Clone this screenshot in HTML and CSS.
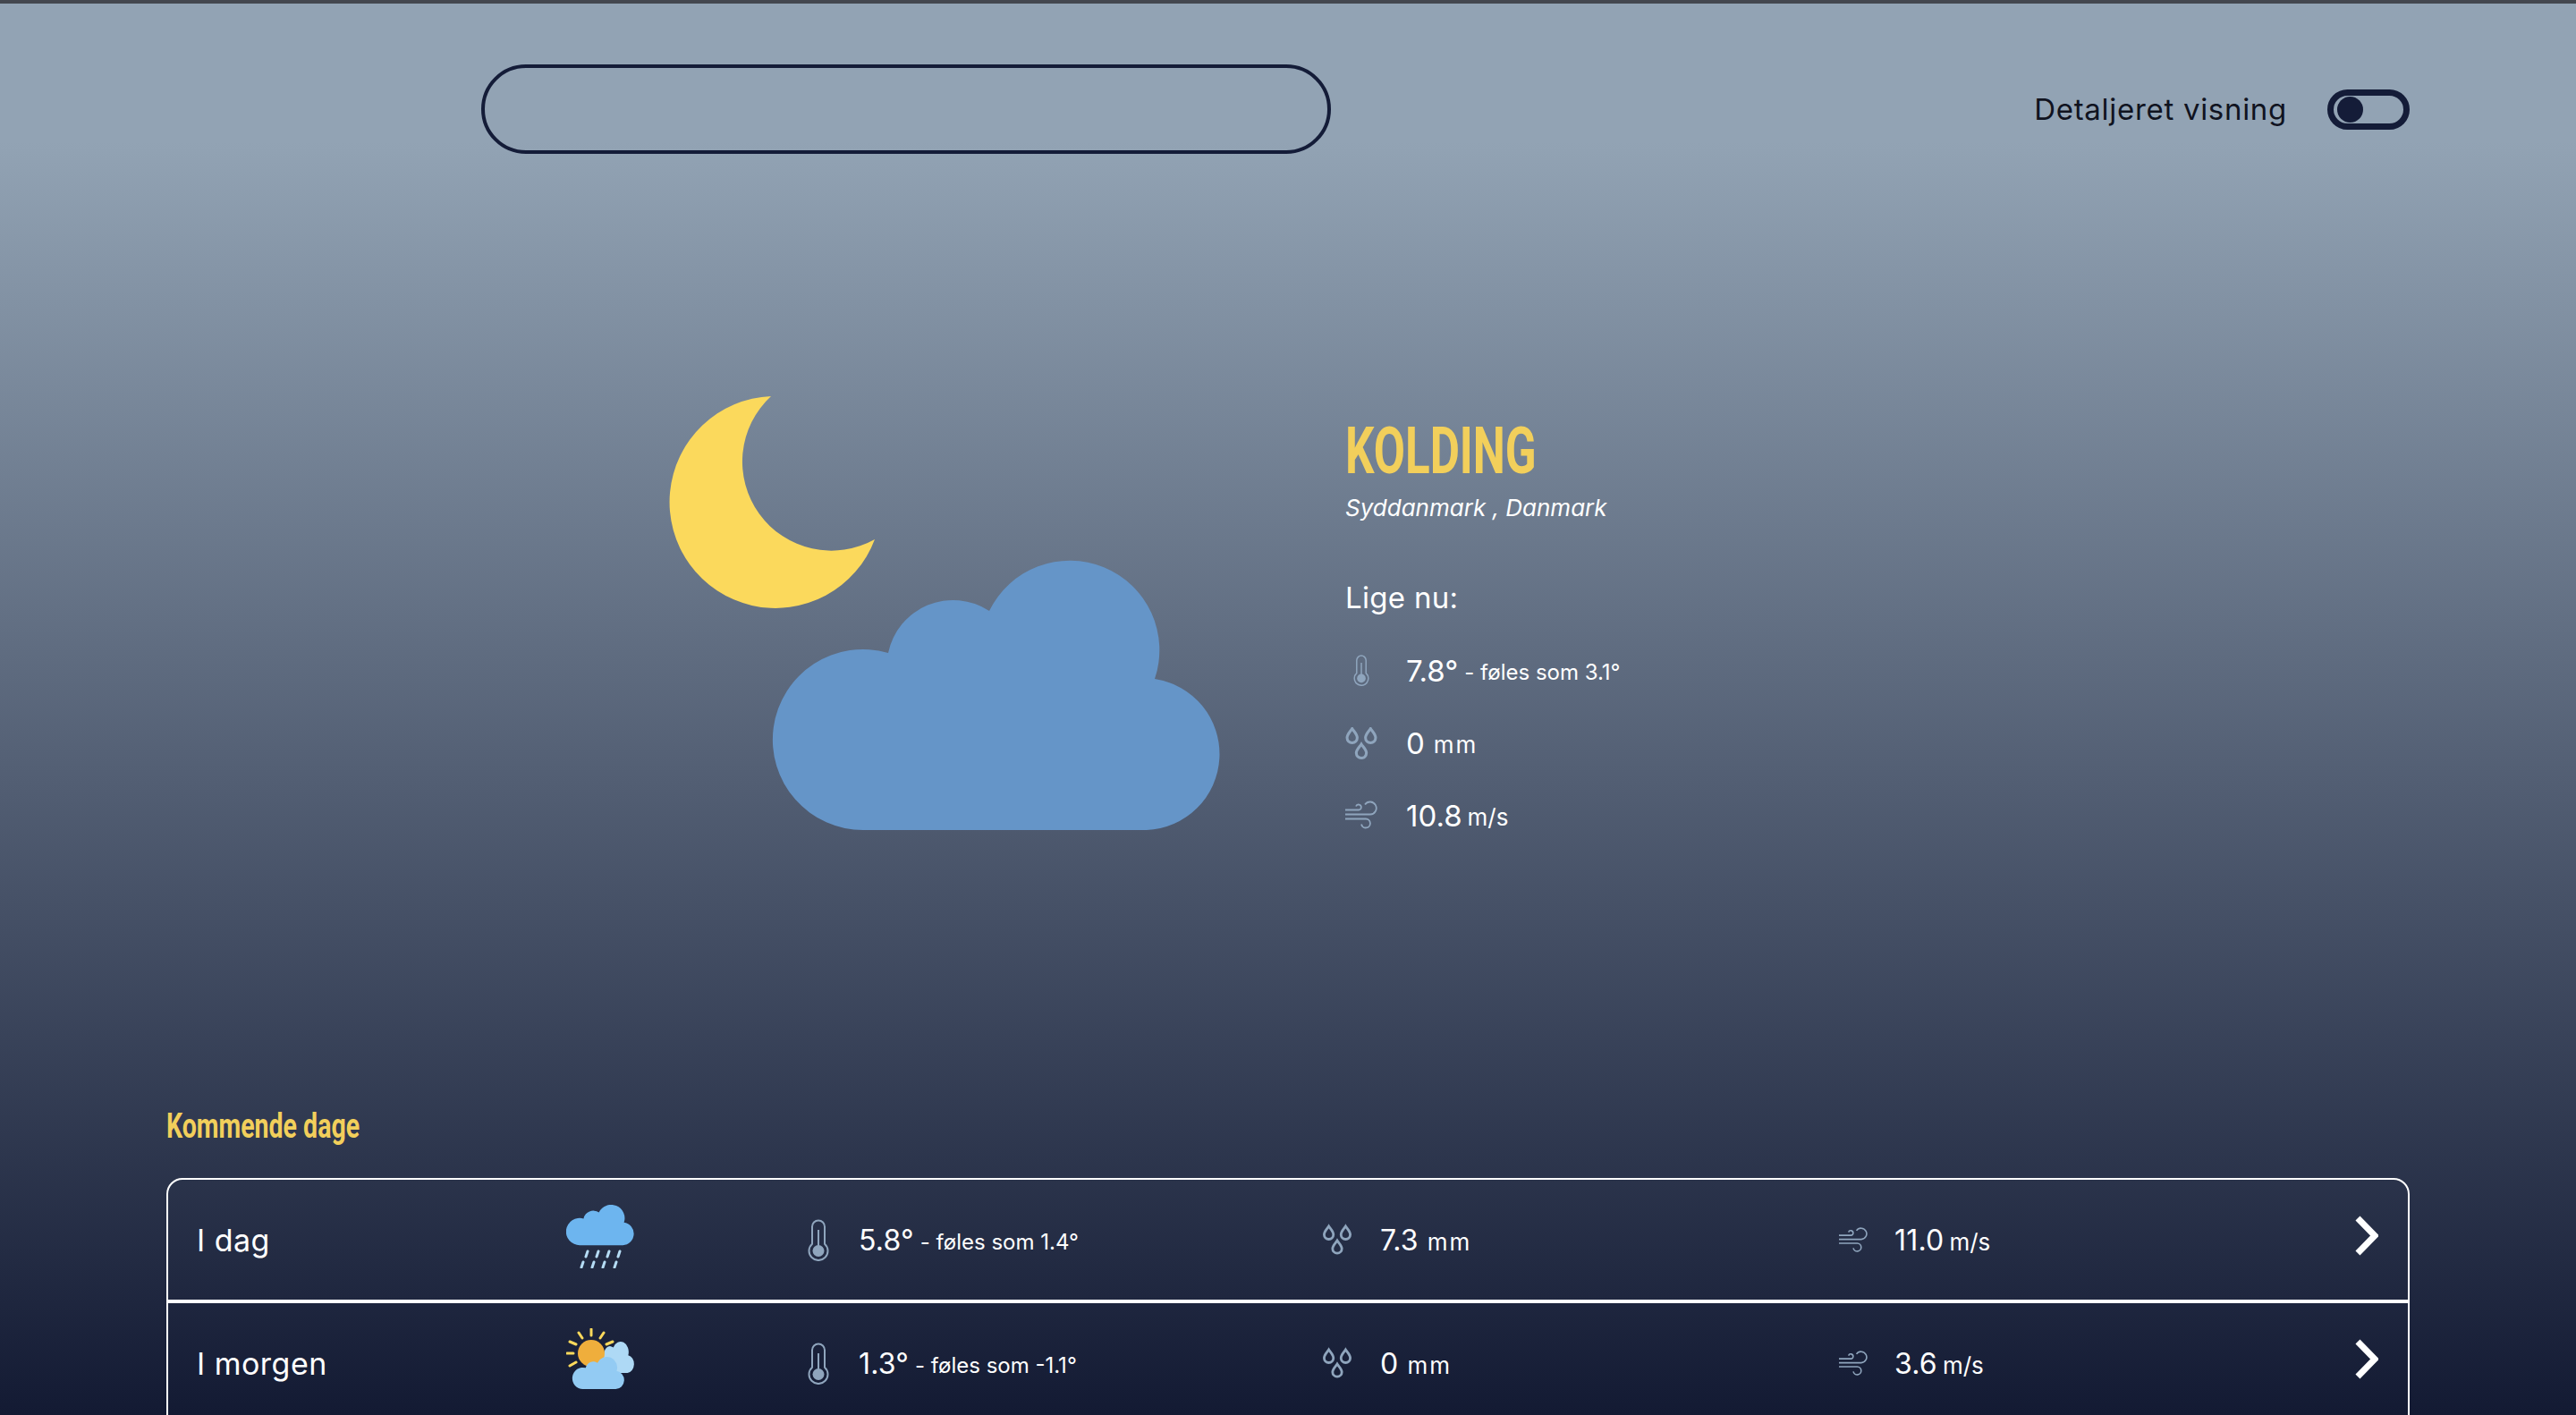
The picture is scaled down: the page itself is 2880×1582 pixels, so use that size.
FILE: index.html
```html
<!DOCTYPE html>
<html lang="da"><head><title>Vejret i Kolding</title><meta charset="utf-8">
<link rel="stylesheet" href="styles.css">
</head>
<body>
    <svg class="defs" width="0" height="0">
        <defs>
            <path id="cloud" d="M101 301A101 101 0 1 1 128 103A74 74 0 0 1 241 56A100.2 100.2 0 0 1 426 132A85 85 0 0 1 417 301Z"/>
            <symbol id="thermo" viewBox="0 0 23 47">
                <path class="line" d="M4.5 27.7V8.5a7 7 0 0 1 14 0V27.7a10.5 10.5 0 1 1-14 0Z"/>
                <path class="line" d="M11.5 12V32"/>
                <circle class="dot" cx="11.5" cy="35.5" r="6.5"/>
            </symbol>
            <symbol id="drops" viewBox="0 0 34 35">
                <path class="line drop" d="M7 1.5C8.500 4 12.500 7.500 12.500 11.500a5.500 5.500 0 0 1-11 0C1.500 7.500 5.500 4 7 1.500Z"/>
                <path class="line drop" d="M27 1.500C28.500 4 32.500 7.500 32.500 11.500a5.500 5.500 0 0 1-11 0C21.500 7.500 25.500 4 27 1.500Z"/>
                <path class="line drop" d="M17 18.500C18.500 21 22.500 24.500 22.500 28a5.500 5.500 0 0 1-11 0C11.500 24.500 15.500 21 17 18.500Z"/>
            </symbol>
            <symbol id="wind" viewBox="0 0 36 32">
                <path class="line thin" d="M0 10H15a3 3 0 1 0-3-4"/>
                <path class="line thin" d="M0 15H28a7 7 0 1 0-6-11"/>
                <path class="line thin" d="M0 20H23a5 5 0 1 1-5 6"/>
            </symbol>
        </defs>
    </svg>

    <header class="topbar">
        <input class="search" type="text" aria-label="Søg">
        <div class="switch-wrap">
            <span class="switch-label">Detaljeret visning</span>
            <span class="switch"><span class="knob"></span></span>
        </div>
    </header>

    <main class="hero">
        <svg class="hero-icon" width="615" height="485" viewBox="0 0 615 485">
            <path class="moon" d="M113 0A118.500 118.500 0 1 0 229 160A99.500 99.500 0 0 1 113 0Z"/>
            <use href="#cloud" class="hero-cloud" x="116" y="184"/>
        </svg>
        <div class="now">
            <h1 class="city">KOLDING</h1>
            <p class="region">Syddanmark , Danmark</p>
            <h2 class="now-title">Lige nu:</h2>
            <div class="now-row"><svg class="ico ico-t"><use href="#thermo"/></svg><span class="val">7.8°</span><span class="sub">- føles som 3.1°</span></div>
            <div class="now-row"><svg class="ico ico-d"><use href="#drops"/></svg><span class="val">0</span><span class="unit mm">mm</span></div>
            <div class="now-row"><svg class="ico ico-w"><use href="#wind"/></svg><span class="val">10.8</span><span class="unit">m/s</span></div>
        </div>
    </main>

    <section class="days">
        <h3 class="days-title">Kommende dage</h3>
        <div class="day">
            <span class="day-name">I dag</span>
            <svg class="day-icon" viewBox="0 0 77 71">
                <use href="#cloud" class="c-rain" transform="scale(.1517 .15)"/>
                <path class="rain" d="M24 52l-2 6M36 52l-2 6M48 52l-2 6M60 52l-2 6M19 64l-2 6M31 64l-2 6M43 64l-2 6M56 64l-2 6"/>
            </svg>
            <div class="stat"><svg class="ico ico-t"><use href="#thermo"/></svg><span class="val">5.8°</span><span class="sub">- føles som 1.4°</span></div>
            <div class="stat"><svg class="ico ico-d"><use href="#drops"/></svg><span class="val">7.3</span><span class="unit mm">mm</span></div>
            <div class="stat"><svg class="ico ico-w"><use href="#wind"/></svg><span class="val">11.0</span><span class="unit">m/s</span></div>
            <svg class="chevron" viewBox="0 0 26 45"><path d="M3 3L22 22.5L3 42"/></svg>
        </div>
        <div class="day">
            <span class="day-name">I morgen</span>
            <svg class="day-icon" viewBox="0 0 77 71">
                <path class="rays" d="M28 1V8M14 5l4 6M42 5l-4 6M4 15l7 3M52 15l-7 3M1 28H8M4 42l7-4"/>
                <use href="#cloud" class="c-back" transform="translate(31 15) scale(.09 .116)"/>
                <circle class="sun" cx="28" cy="28" r="15"/>
                <use href="#cloud" class="c-front" transform="translate(7 32) scale(.116 .12)"/>
            </svg>
            <div class="stat"><svg class="ico ico-t"><use href="#thermo"/></svg><span class="val">1.3°</span><span class="sub">- føles som -1.1°</span></div>
            <div class="stat"><svg class="ico ico-d"><use href="#drops"/></svg><span class="val">0</span><span class="unit mm">mm</span></div>
            <div class="stat"><svg class="ico ico-w"><use href="#wind"/></svg><span class="val">3.6</span><span class="unit">m/s</span></div>
            <svg class="chevron" viewBox="0 0 26 45"><path d="M3 3L22 22.5L3 42"/></svg>
        </div>
    </section>
</body>
</html>
```

FILE: styles.css
```css
* {box-sizing: border-box;}
html, body {margin: 0; height: 100%;}
body {
    height: 100vh; overflow: hidden; color: #fff;
    font-family: "Inter", "Liberation Sans", sans-serif;
    background: linear-gradient(180deg, #92a3b4 10%, #131a33 100%);
    border-top: 4px solid #43474f;
}
.defs {display: block; height: 0;}

/* top */
.topbar {display: flex; justify-content: space-between; align-items: center; padding: 68px 186px 0 538px;}
.search {width: 950px; height: 100px; border: 4px solid #141c38; border-radius: 50px; background: transparent;}
.switch-wrap {display: flex; align-items: center; gap: 45px;}
.switch-label {font-size: 33px; letter-spacing: .7px; color: #10131f;}
.switch {display: flex; align-items: center; width: 92px; height: 45px; padding-left: 4px; border: 7px solid #141c38; border-radius: 23px;}
.knob {width: 29px; height: 29px; border-radius: 50%; background: #141c38;}

/* hero */
.hero {display: flex; margin-top: 271px; padding-left: 749px; gap: 140px; height: 485px;}
.hero-icon {overflow: visible;}
.moon {fill: #fbd95c;}
.hero-cloud {fill: #6595c8;}
.now {padding-top: 26px;}
.city {margin: 0; font: 700 72px/72px "Roboto", sans-serif; color: #f2cf5b; transform: scaleX(.71); transform-origin: left;}
.region {margin: 9px 0 0; font-size: 26px; line-height: 36px; font-style: italic;}
.now-title {margin: 62px 0 0; font-size: 33px; line-height: 40px; font-weight: 400; letter-spacing: .3px;}
.now-row {display: flex; align-items: center; height: 81px;}
.now-title + .now-row {margin-top: 21px;}
.now-row .ico-t {height: 35px;}

/* small icons */
.ico {flex: none; width: 36px; height: 47px; margin-right: 32px;}
.ico-d {height: 36px;}
.ico-w {height: 33px;}
.line {fill: none; stroke: #8fa5bd; stroke-width: 2;}
.drop {stroke-width: 3;}
.thin {stroke-width: 1.8;}
.dot {fill: #8fa5bd;}
.val {font-size: 33px;}
.sub, .unit {font-size: 26px; margin-left: 6px; padding-top: 4px;}
.sub {font-size: 24px; margin-left: 7px;}
.mm {letter-spacing: 2px; margin-left: 10px;}

/* list */
.days {padding: 0 186px; margin-top: 309px;}
.days-title {margin: 0 0 36px; font: 700 38px/44px "Roboto", sans-serif; color: #f2cf5b; transform: scaleX(.75); transform-origin: left;}
.day {display: grid; grid-template-columns: 413px 266px 580px 577px 577px auto; align-items: center; height: 138px; padding-left: 32px; border: 2px solid #fff;}
.day:first-of-type {border-radius: 18px 18px 0 0;}
.day-name {font-size: 34px; letter-spacing: .5px;}
.day-icon {width: 77px; height: 71px; margin-top: -7px;}
.stat {display: flex; align-items: center;}
.stat .val {font-size: 32px; letter-spacing: .2px;}
.stat .ico {width: 32px; margin-right: 32px;}
.stat .ico-t {margin-right: 29px;}
.stat .ico-w {margin-right: 30px;}
.c-rain {fill: #6db5ef;}
.rain {fill: none; stroke: #b5dcf5; stroke-width: 3; stroke-linecap: round;}
.rays {fill: none; stroke: #fbd95c; stroke-width: 3; stroke-linecap: round;}
.sun {fill: #efae3c;}
.c-back {fill: #aed9f5;}
.c-front {fill: #93cbf3;}
.chevron {width: 26px; height: 45px; margin-top: -10px;}
.chevron path {fill: none; stroke: #fff; stroke-width: 7;}
```
